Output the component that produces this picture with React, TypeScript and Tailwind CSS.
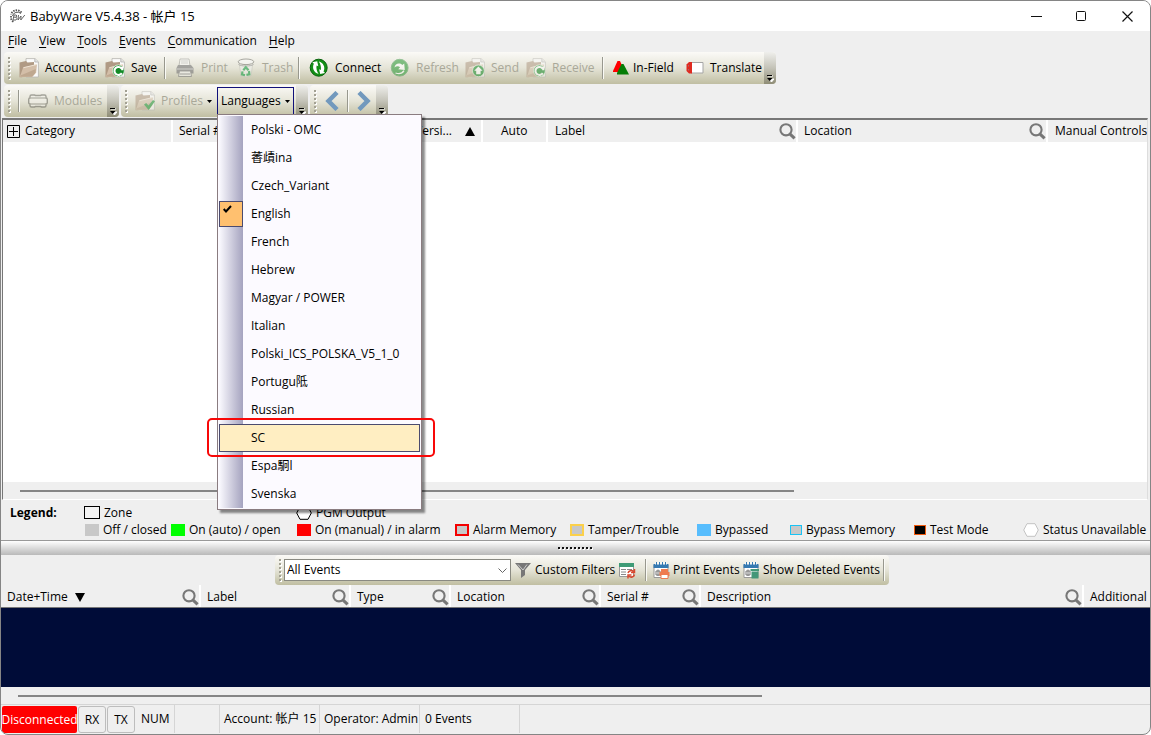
import React from "react";

const BAR = "bg-linear-to-b from-[#fbfaf7] via-[#e5e4d7] to-[#c0bea2]";

function Magnifier() {
  return (
    <svg width="17" height="17" viewBox="0 0 17 17" fill="none" stroke="#777" className="shrink-0" aria-hidden="true">
      <circle cx="7" cy="6.8" r="5.6" strokeWidth="2.1" />
      <path d="M10.8 10.8 L15.6 15.4" strokeWidth="3" />
    </svg>
  );
}

function Grip() {
  return (
    <svg width="3" height="23" viewBox="0 0 3 23" className="shrink-0" aria-hidden="true">
      {[0, 4, 8, 12, 16, 20].map((y) => (
        <g key={y}>
          <rect x="1" y={y + 1} width="2" height="2" fill="#fff" />
          <rect x="0" y={y} width="2" height="2" fill="#a3a193" />
        </g>
      ))}
    </svg>
  );
}

function Divider() {
  return <span className="h-[22px] w-[2px] shrink-0 border-l border-[#98988e] bg-[#fafaf5]" />;
}

function Overflow() {
  return (
    <button aria-label="Toolbar options" className="flex w-3 shrink-0 items-end justify-center self-stretch rounded-r bg-linear-to-b from-[#efefec] via-[#c4c3b8] to-[#8f8d76] pb-[2px]">
      <svg width="8" height="8" viewBox="0 0 8 8" aria-hidden="true">
        <path d="M2 2h5M3 5h5L5.5 8z" stroke="#fff" fill="#fff" />
        <path d="M1 1.5h5" stroke="#000" />
        <path d="M1 4h5.5L3.7 7z" fill="#000" />
      </svg>
    </button>
  );
}

function Folder({ badge }: { badge?: "save" | "send" | "receive" | "check" }) {
  const arrow = badge && badge !== "check";
  return (
    <svg width="20" height="20" viewBox="0 0 20 20" aria-hidden="true">
      <path d="M7 .6h9l3.400 3.200V19H7z" fill="#fbfbfa" stroke="#b5b4ae" strokeWidth=".8" />
      <path d="M15.800.800V4h3.400" fill="#e4e4e2" stroke="#aaa" strokeWidth=".7" />
      <path d="M.5 4.500L7 3l1.500 1.600L15 4v10L3 19.200H.5z" fill="#b09a84" />
      <path d="M.6 19.200L4.200 9.500 18 6.200l-.8 8.300L13.500 18.800z" fill="#d3bea8" />
      <path d="M1.500 17.500L16.800 11l-.4 4L13 18.800H1z" fill="#bfa890" />
      <path d="M4.400 9.700L17.800 6.500" stroke="#f2e6d8" strokeWidth=".9" />
      {badge === "check" && <path d="M9 13.500l2.200-1.600 2.300 2.600 4.500-5.500 2 1.300-6.300 8.700z" fill="#1d9636" />}
      {arrow && <circle cx="13.400" cy="12.800" r="5.900" fill="#128a26" stroke="#e9f0e4" strokeWidth=".8" />}
      {badge === "send" && <path d="M13.400 8.600l4.200 4.200h-2v3.400h-4.400v-3.400h-2z" fill="#fff" />}
      {arrow && badge !== "send" && (
        <path d="M17.200 8.800v3.400M16.600 10.500a4 4 0 1 0 .2 4.600" fill="none" stroke="#fff" strokeWidth="2.100" />
      )}
    </svg>
  );
}

function Printer() {
  return (
    <svg width="20" height="20" viewBox="0 0 20 20" aria-hidden="true">
      <path d="M5 1h9l1 7H4z" fill="#fafaf8" stroke="#8d8d88" strokeWidth=".8" />
      <path d="M6 3h7M6 5h7" stroke="#bbb" />
      <path d="M3 7h13l2.500 3v5.500h-17V10z" fill="#6d6d70" />
      <path d="M2 11h16" stroke="#b9b9b9" strokeWidth="1.200" />
      <path d="M4.500 13h11l1 5.500h-13z" fill="#f6f6f4" stroke="#6d6d70" strokeWidth=".9" />
      <path d="M5 16h10" stroke="#77777a" />
    </svg>
  );
}

function TrashCan() {
  return (
    <svg width="20" height="20" viewBox="0 0 20 20" aria-hidden="true">
      <path d="M3 4l2 14q5 2 10 0l2-14z" fill="#eeefec" stroke="#c0c0b8" strokeWidth=".8" />
      <ellipse cx="10" cy="3.800" rx="7.800" ry="2.800" fill="#fafafa" stroke="#6d6d66" />
      <path d="M2.500 6.500c3 2 12 2 15 0" fill="none" stroke="#888" />
      <path d="M7.300 12.300L9.800 9.300l2.700 3M13 13l.4 3.300-3 .5M9 17.200l-3-.8.500-3" fill="none" stroke="#0d9a3e" strokeWidth="2.200" />
    </svg>
  );
}

function Connect() {
  return (
    <svg width="20" height="20" viewBox="0 0 20 20" aria-hidden="true">
      <circle cx="9.700" cy="9.700" r="8.500" fill="#138f16" stroke="#07600b" />
      <path d="M3.300 4.300L8.200 3.300 9.300 8.200 7.600 7.400c-.6 2.800.2 5.700 2 8.500C5 14.800 2.700 10 4.900 5.800z" fill="#fff" />
      <path d="M16.100 15.100l-4.900 1-1.100-4.900 1.700.8c.6-2.800-.2-5.700-2-8.500 4.600 1.100 6.900 5.900 4.700 10.100z" fill="#fff" />
    </svg>
  );
}

function Refresh() {
  return (
    <svg width="20" height="20" viewBox="0 0 20 20" aria-hidden="true">
      <circle cx="9.700" cy="9.700" r="8.400" fill="#23962f" stroke="#4c9d56" />
      <path d="M4.500 9.500C5 5.500 9.500 4.200 12.300 7l1.900-1.500.600 6.500-6.600-.800 1.900-1.900C8.500 7.800 6.300 8 4.500 9.500z" fill="#fff" />
      <path d="M5.500 15c3.500 1.200 7 .2 8.500-2.300" fill="none" stroke="#fff" strokeWidth="1.300" />
    </svg>
  );
}

function Modules() {
  return (
    <svg width="20" height="20" viewBox="0 0 20 20" fill="none" stroke="#68685f" strokeWidth="1.400" aria-hidden="true">
      <path d="M2 7V5.500q0-1.500 1.500-1.500h3l1 .5h5l1-.5h3Q18 4 18 5.500V7q1.300 0 1.300 1.500v3Q19.300 13 18 13v1.500q0 1.500-1.500 1.500h-3l-1-.5h-5l-1 .5h-3Q2 16 2 14.500V13Q.7 13 .7 11.500v-3Q.7 7 2 7z" fill="#f4f3ec" />
      <path d="M2.500 7h15M2.500 13h15" strokeWidth="1" />
    </svg>
  );
}

function InField() {
  return (
    <svg width="18" height="18" viewBox="0 0 18 18" aria-hidden="true">
      <path d="M5.500 2H8l5 11H1v-1z" fill="#f00" />
      <path d="M9.500 5h2L17 15.500H5V14z" fill="#067d06" />
    </svg>
  );
}

function Translate() {
  return (
    <svg width="18" height="14" viewBox="0 0 18 14" aria-hidden="true">
      <path d="M5 1.500h12v10.500H5z" fill="#fff" stroke="#a5a5a5" />
      <path d="M3 1h3v11.500H3L.500 10V3.500z" fill="#df2a20" />
      <path d="M2.500 4v1.500M2.500 8v1.500" stroke="#a66" />
    </svg>
  );
}

function Calendar({ mode }: { mode: "print" | "trash" }) {
  return (
    <svg width="17" height="17" viewBox="0 0 17 17" className="shrink-0" aria-hidden="true">
      <path d="M1 3h14v12.500H1z" fill="#fff" stroke="#999" />
      <path d="M.5 2h15v4H.5z" fill="#3579b1" />
      <path d="M3.500 0v3M6.500 0v3M9.500 0v3M12.500 0v3" stroke="#fff" strokeWidth="2" />
      <path d="M3.500 0v3M6.500 0v3M9.500 0v3M12.500 0v3" stroke="#3579b1" />
      <path d="M3 9h4v4H3zM5 7.500V14M8 7.500h4" fill="none" stroke="#777" />
      {mode === "print" ? (
        <g>
          <path d="M8 7h7v4H8zM6.500 10h10v4h-10z" fill="#ee7b50" />
          <path d="M8 12.500h7v4H8z" fill="#fff" stroke="#ee7b50" />
        </g>
      ) : (
        <path d="M7.500 7H16v2H7.500zM8.500 9.500h7v7h-7z" fill="#439778" />
      )}
    </svg>
  );
}

function ToolButton({ icon, label, width, disabled }: { icon: React.ReactNode; label: string; width: string; disabled?: boolean }) {
  return (
    <button disabled={disabled} className={`flex shrink-0 items-center gap-[6px] whitespace-nowrap disabled:text-[#a9a899] ${width}`}>
      <span className={`flex w-5 shrink-0 justify-center ${disabled ? "opacity-55" : ""}`}>{icon}</span>
      {label}
    </button>
  );
}

const languages = [
  "Polski - OMC", "萫歵ina", "Czech_Variant", "English", "French", "Hebrew", "Magyar / POWER",
  "Italian", "Polski_ICS_POLSKA_V5_1_0", "Portugu阺", "Russian", "SC", "Espa駉l", "Svenska",
];

function LanguageMenu() {
  return (
    <div role="menu" aria-label="Languages" className="absolute top-[26px] left-[-1px] z-10 w-[205px] border border-[#8a7c80] bg-[#fcfaff] p-px text-left shadow-[3px_3px_2px_rgba(0,0,0,0.45)]">
      <div className="bg-[linear-gradient(to_right,#fbfaff,#a5a3bf)] bg-[length:24px_100%] bg-no-repeat">
        {languages.map((name) => {
          const checked = name === "English";
          return (
            <button
              key={name}
              role="menuitemradio"
              aria-checked={checked}
              className={`relative flex h-7 w-full items-center border pl-[31px] text-left whitespace-nowrap ${name === "SC" ? "border-[#4b4b6f] bg-[#ffeec2]" : "border-transparent"}`}
            >
              {checked && (
                <span className="absolute top-0 left-[-1px] flex h-[26px] w-6 border border-[#4b4b6f] bg-[#ffc06f] pt-[3px] pl-[3px]">
                  <svg width="9" height="9" viewBox="0 0 9 9" fill="none" stroke="#000" strokeWidth="2" aria-hidden="true">
                    <path d="M.7 4L3 6.500 8 1" />
                  </svg>
                </span>
              )}
              {name}
              {name === "SC" && <span className="pointer-events-none absolute top-[-7px] right-[-16px] bottom-[-6px] left-[-13px] rounded-[5px] border-2 border-[#f80808]" />}
            </button>
          );
        })}
      </div>
    </div>
  );
}

function SplitterDots() {
  return (
    <svg width="36" height="3" viewBox="0 0 36 3" aria-hidden="true">
      {[0, 4, 8, 12, 16, 20, 24, 28, 32].map((x) => (
        <g key={x}>
          <rect x={x + 1} y="1" width="2" height="2" fill="#fff" />
          <rect x={x} y="0" width="2" height="2" fill="#111" />
        </g>
      ))}
    </svg>
  );
}

interface Column {
  label: string;
  width?: string;
  search?: boolean;
  sort?: "asc" | "desc";
  pad?: string;
}

const moduleColumns: Column[] = [
  { label: "Category", width: "w-[170px]", pad: "pl-1" },
  { label: "Serial #", width: "w-[235px]", pad: "pl-[6px]" },
  { label: "Versi...", width: "w-[75px]", pad: "pl-[7px]", sort: "asc" },
  { label: "Auto", width: "w-[65px]", pad: "pl-[18px]" },
  { label: "Label", width: "w-[250px]", pad: "pl-[7px]", search: true },
  { label: "Location", width: "w-[250px]", pad: "pl-[6px]", search: true },
  { label: "Manual Controls", pad: "pl-[7px]" },
];

const eventColumns: Column[] = [
  { label: "Date+Time", width: "w-[200px]", pad: "pt-[2px] pl-[6px]", sort: "desc", search: true },
  { label: "Label", width: "w-[150px]", pad: "pt-[2px] pl-[6px]", search: true },
  { label: "Type", width: "w-[100px]", pad: "pt-[2px] pl-[6px]", search: true },
  { label: "Location", width: "w-[150px]", pad: "pt-[2px] pl-[6px]", search: true },
  { label: "Serial #", width: "w-[100px]", pad: "pt-[2px] pl-[6px]", search: true },
  { label: "Description", width: "w-[383px]", pad: "pt-[2px] pl-[6px]", search: true },
  { label: "Additional Info", pad: "pt-[2px] pl-[6px]" },
];

function HeaderTable({ columns }: { columns: Column[] }) {
  return (
    <table className="w-full table-fixed border-collapse">
      <thead>
        <tr>
          {columns.map((c) => (
            <th key={c.label} className={`overflow-hidden bg-[#efefef] p-0 font-normal ${c.width ?? ""}`}>
              <div className={`flex h-[22px] items-center whitespace-nowrap ${c.width ? "border-r-2 border-white" : ""} ${c.pad ?? ""}`}>
                {c.label === "Category" && (
                  <svg width="13" height="13" viewBox="0 0 13 13" fill="none" stroke="#000" className="mr-[5px] shrink-0" aria-hidden="true">
                    <path d="M.5.500h12v12H.5zM6.500 2v9M2 6.500h9" />
                  </svg>
                )}
                {c.label}
                {c.sort && (
                  <svg width="10" height="9" viewBox="0 0 10 9" className={c.sort === "asc" ? "mr-[6px] ml-auto" : "ml-[7px]"} aria-hidden="true">
                    <path d={c.sort === "asc" ? "M5 0l5 9H0z" : "M0 0h10L5 9z"} />
                  </svg>
                )}
                {c.search && <span className="ml-auto"><Magnifier /></span>}
              </div>
            </th>
          ))}
        </tr>
      </thead>
    </table>
  );
}

function Hexagon({ stroke }: { stroke: string }) {
  return (
    <svg width="16" height="14" viewBox="0 0 16 14" className="shrink-0" aria-hidden="true">
      <path d="M4 .7h8l3.300 6.300-3.300 6.300H4L.7 7z" fill="#fff" stroke={stroke} />
    </svg>
  );
}

function Legend({ swatch, label, children }: { swatch?: string; label: string; children?: React.ReactNode }) {
  return (
    <span className="flex items-center gap-1 whitespace-nowrap">
      {children ?? <span className={`shrink-0 ${swatch}`} />}
      {label}
    </span>
  );
}

const menus = ["File", "View", "Tools", "Events", "Communication", "Help"];

export default function App() {
  return (
    <div className="flex min-h-screen flex-col overflow-hidden rounded-lg border border-[#858585] bg-[#efefef] font-['Open_Sans','Noto_Sans_CJK_SC',sans-serif] text-[12px] leading-4 text-black">
      <header className="flex h-[30px] items-center bg-white pl-2">
        <svg width="17" height="15" viewBox="0 0 17 15" fill="none" stroke="#555" aria-hidden="true">
          <path d="M12.500 3.500A6 5.800 0 0 0 2 5.500M2 7v2.500a6 5 0 0 0 3 3.500" strokeWidth="1.800" strokeDasharray="1.500 1" />
          <path d="M12 4.500A5 4.500 0 0 0 3.500 7" />
          <path d="M5 6h2.200q1.300 1 0 2.200H4.700M7 8.200q1.700 1.300 0 2.800H4L5 6M9.500 6L9 11l3-4-.200 4 4-5" strokeWidth=".9" />
        </svg>
        <h1 className="ml-1 flex-1 text-[13px]">BabyWare V5.4.38 - 帐户 15</h1>
        <div className="flex self-stretch">
          <button aria-label="Minimize" className="flex w-[45px] items-center justify-center">
            <svg width="11" height="11" stroke="#111" fill="none"><path d="M0 5.500h11" /></svg>
          </button>
          <button aria-label="Maximize" className="flex w-[45px] items-center justify-center">
            <svg width="11" height="11" stroke="#111" fill="none"><rect x=".5" y=".5" width="9" height="9" rx="1" /></svg>
          </button>
          <button aria-label="Close" className="flex w-[46px] items-center justify-center">
            <svg width="11" height="11" stroke="#111" fill="none"><path d="M.5.500l10 10M10.500.500l-10 10" strokeWidth="1.200" /></svg>
          </button>
        </div>
      </header>

      <nav className="flex h-[21px] items-center gap-3 pb-px pl-[7px]">
        {menus.map((m) => (
          <button key={m}><span className="underline underline-offset-2">{m[0]}</span>{m.slice(1)}</button>
        ))}
      </nav>

      <div className="flex pl-[3px]">
        <div className={`flex h-8 items-center rounded pl-1 ${BAR}`}>
          <Grip />
          <span className="w-2" />
          <ToolButton icon={<Folder />} label="Accounts" width="w-[86px]" />
          <ToolButton icon={<Folder badge="save" />} label="Save" width="w-[59px]" />
          <Divider />
          <span className="w-[9px]" />
          <ToolButton icon={<Printer />} label="Print" width="w-[61px]" disabled />
          <ToolButton icon={<TrashCan />} label="Trash" width="w-[62px]" disabled />
          <Divider />
          <span className="w-[9px]" />
          <ToolButton icon={<Connect />} label="Connect" width="w-[81px]" />
          <ToolButton icon={<Refresh />} label="Refresh" width="w-[75px]" disabled />
          <ToolButton icon={<Folder badge="send" />} label="Send" width="w-[61px]" disabled />
          <ToolButton icon={<Folder badge="receive" />} label="Receive" width="w-[76px]" disabled />
          <Divider />
          <button className="ml-2 flex w-[74px] shrink-0 items-center gap-[3px] whitespace-nowrap"><InField />In-Field</button>
          <button className="flex w-[78px] shrink-0 items-center gap-[6px] whitespace-nowrap"><Translate />Translate</button>
          <Overflow />
        </div>
      </div>

      <div className="mt-px flex h-[33px] gap-[2px] pl-[3px]">
        <div className={`flex h-8 items-center rounded pl-1 ${BAR}`}>
          <Grip />
          <span className="w-[7px]" />
          <Divider />
          <span className="w-2" />
          <ToolButton icon={<Modules />} label="Modules" width="w-[79px]" disabled />
          <Overflow />
        </div>
        <div className={`flex h-8 items-center rounded pl-1 ${BAR}`}>
          <Grip />
          <span className="w-[7px]" />
          <ToolButton icon={<Folder badge="check" />} label="Profiles" width="w-[72px]" disabled />
          <button aria-label="Profiles list" className="flex w-[10px]">
            <svg width="5" height="3" aria-hidden="true"><path d="M0 0h5L2.500 3z" /></svg>
          </button>
          <div className="relative h-[29px] border border-b-0 border-[#10107a]">
            <button aria-haspopup="menu" aria-expanded="true" className="flex h-[27px] w-[75px] items-center justify-between pr-[3px] pl-[3px]">
              Languages
              <svg width="5" height="3" aria-hidden="true"><path d="M0 0h5L2.500 3z" /></svg>
            </button>
            <LanguageMenu />
          </div>
          <span className="w-[2px]" />
          <Overflow />
        </div>
        <div className={`flex h-8 items-center rounded pl-1 ${BAR}`}>
          <Grip />
          <button aria-label="Previous" className="flex w-[30px] justify-center">
            <svg width="14" height="20" fill="none" stroke="#7299bd" strokeWidth="4.500" aria-hidden="true"><path d="M12 1.500L3.500 10 12 18.500" /></svg>
          </button>
          <Divider />
          <button aria-label="Next" className="flex w-[27px] justify-center pl-[2px]">
            <svg width="14" height="20" fill="none" stroke="#7299bd" strokeWidth="4.500" aria-hidden="true"><path d="M2 1.500L10.500 10 2 18.500" /></svg>
          </button>
          <Overflow />
        </div>
      </div>

      <main className="mr-[2px] ml-px flex min-h-[382px] flex-1 flex-col overflow-hidden border-t-2 border-r border-b border-l border-t-[#777] border-r-[#ddd] border-b-white border-l-[#777] bg-white">
        <HeaderTable columns={moduleColumns} />
        <div className="flex-1" />
        <div className="flex h-[17px] items-center bg-[#efefef] pl-[17px]">
          <div className="h-[2px] w-[774px] bg-[#858585]" />
        </div>
      </main>

      <section aria-label="Legend" className="flex h-10 flex-col justify-center gap-px pt-[2px] pl-[9px]">
        <div className="grid grid-cols-[74px_212px_1fr] items-center">
          <b>Legend:</b>
          <Legend label="Zone" swatch="h-[13px] w-4 border border-black bg-[#f3f3f3]" />
          <Legend label="PGM Output"><Hexagon stroke="#000" /></Legend>
        </div>
        <div className="grid grid-cols-[86px_126px_158px_115px_127px_93px_124px_109px_1fr] items-center pl-[75px]">
          <Legend label="Off / closed" swatch="h-3 w-[14px] bg-[#c8c8c8]" />
          <Legend label="On (auto) / open" swatch="h-3 w-[14px] bg-[#00ff00]" />
          <Legend label="On (manual) / in alarm" swatch="h-3 w-[14px] bg-[#ff0000]" />
          <Legend label="Alarm Memory" swatch="h-3 w-[14px] border-2 border-[#f40000] bg-[#c8c8c8]" />
          <Legend label="Tamper/Trouble" swatch="h-3 w-[14px] border-2 border-[#fbd04a] bg-[#c8c8c8]" />
          <Legend label="Bypassed" swatch="h-3 w-[14px] bg-[#57bdfd]" />
          <Legend label="Bypass Memory" swatch="h-[10px] w-3 border border-[#19c3f5] bg-[#c8c8c8]" />
          <Legend label="Test Mode" swatch="h-[10px] w-3 border border-[#f05a10] bg-black" />
          <Legend label="Status Unavailable"><Hexagon stroke="#c3c3c3" /></Legend>
        </div>
      </section>

      <div role="separator" className="flex h-[15px] items-center justify-center border-t border-[#999] bg-linear-to-b from-white to-[#b9b9b9]">
        <SplitterDots />
      </div>

      <div className="ml-[274px] flex">
        <div className={`flex h-[30px] items-center rounded pl-1 ${BAR}`}>
          <Grip />
          <div className="relative ml-[2px] flex">
            <select aria-label="Event filter" className="h-[22px] w-[227px] appearance-none border border-[#8a8a82] bg-white pl-[2px] text-[12px] outline-none">
              <option>All Events</option>
            </select>
            <svg width="9" height="5" fill="none" stroke="#666" className="pointer-events-none absolute top-[9px] right-1" aria-hidden="true"><path d="M.5.500l4 4 4-4" /></svg>
          </div>
          <button className="ml-1 flex w-[100px] shrink-0 items-center gap-1 whitespace-nowrap">
            <svg width="16" height="16" viewBox="0 0 16 16" className="shrink-0" aria-hidden="true">
              <path d="M0 1h16L10 8v5l-4 3V8z" fill="#777" /><path d="M3 2.500L8 8l4-5.500" fill="none" stroke="#ccc" />
            </svg>
            Custom Filters
          </button>
          <button aria-label="Reset filters" className="ml-1">
            <svg width="17" height="17" viewBox="0 0 17 17" aria-hidden="true">
              <path d="M.5 1.500h14v13H.5z" fill="#fff" stroke="#999" /><path d="M0 1h15v4H0z" fill="#3f9b76" />
              <path d="M2 7.500h5M2 10h5M2 12.500h5M8 7.500h5" stroke="#888" />
              <path d="M9 11a3.300 3.300 0 0 1 5.500-1.500M15.500 7v3.500H12M15.500 12.500a3.300 3.300 0 0 1-5.500 1.700M9 16.500V13h3.500" fill="none" stroke="#d9482f" strokeWidth="1.500" />
            </svg>
          </button>
          <span className="w-[9px]" />
          <Divider />
          <button className="ml-[6px] flex w-[90px] shrink-0 items-center gap-[3px] whitespace-nowrap"><Calendar mode="print" />Print Events</button>
          <button className="flex w-[140px] shrink-0 items-center gap-[3px] whitespace-nowrap"><Calendar mode="trash" />Show Deleted Events</button>
          <Divider />
          <span className="w-1" />
        </div>
      </div>

      <div className="overflow-hidden border-b border-[#777]">
        <HeaderTable columns={eventColumns} />
      </div>
      <div className="h-[79px] bg-[#000c38]" />
      <div className="flex h-[17px] items-center pl-[17px]">
        <div className="h-[2px] w-[744px] bg-[#858585]" />
      </div>

      <footer className="flex h-[30px] items-stretch border-t border-[#d5d5d5] pb-px whitespace-nowrap">
        <span className="mt-px ml-px flex w-[75px] items-center justify-center rounded-[2px] bg-[#ff0000] text-white">Disconnected</span>
        <span className="mt-px ml-px flex w-7 items-center justify-center rounded-[3px] border border-[#bdbdbd]">RX</span>
        <span className="mt-px ml-px flex w-7 items-center justify-center rounded-[3px] border border-[#bdbdbd]">TX</span>
        <span className="flex w-[40px] items-center border-r border-[#d5d5d5] pl-[6px]">NUM</span>
        <span className="w-[45px] border-r border-[#d5d5d5]" />
        <span className="flex w-[100px] items-center border-r border-[#d5d5d5] pl-1">Account: 帐户 15</span>
        <span className="flex w-[100px] items-center border-r border-[#d5d5d5] pl-1">Operator: Admin</span>
        <span className="flex w-[100px] items-center border-r border-[#d5d5d5] pl-[5px]">0 Events</span>
      </footer>
    </div>
  );
}
